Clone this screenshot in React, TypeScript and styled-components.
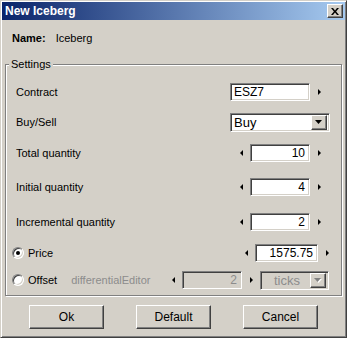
import * as React from "react";
import styled, { createGlobalStyle, css } from "styled-components";

const face = "#d4d0c8";
const shadow = "#808080";
const darkShadow = "#404040";
const font = `"Liberation Sans", Arial, sans-serif`;

const GlobalStyle = createGlobalStyle`
  html, body {
    margin: 0;
    padding: 0;
    background: ${face};
  }
  body {
    font-family: ${font};
    font-size: 11px;
    color: #000;
  }
`;

const Window = styled.div`
  box-sizing: border-box;
  width: 347px;
  height: 338px;
  display: flex;
  flex-direction: column;
  padding: 1px;
  background: ${face};
  border: 1px solid;
  border-color: ${face} ${darkShadow} ${darkShadow} ${face};
  box-shadow: inset 1px 1px #fff, inset -1px -1px ${shadow};
`;

const TitleBar = styled.div`
  height: 18px;
  display: flex;
  align-items: center;
  justify-content: space-between;
  padding: 0 2px 0 3px;
  background: linear-gradient(to right, #0a246a, #a6caf0);
`;

const Title = styled.span`
  color: #fff;
  font-weight: bold;
  font-size: 12px;
  line-height: 18px;
`;

const raised = css`
  border: 1px solid;
  border-color: #fff ${darkShadow} ${darkShadow} #fff;
  box-shadow: inset -1px -1px ${shadow}, inset 1px 1px ${face};
  background: ${face};
`;

const sunken = css`
  border: 1px solid;
  border-color: ${shadow} #fff #fff ${shadow};
  box-shadow: inset 1px 1px ${darkShadow}, inset -1px -1px ${face};
`;

const CloseButton = styled.div`
  box-sizing: border-box;
  width: 16px;
  height: 14px;
  display: flex;
  align-items: center;
  justify-content: center;
  ${raised};
`;

const Body = styled.div`
  display: flex;
  flex-direction: column;
  padding: 8px 3px 0;
`;

const NameRow = styled.div`
  height: 20px;
  display: flex;
  align-items: center;
  gap: 10px;
  padding-left: 7px;
`;

const Bold = styled.span`
  font-weight: bold;
`;

const Group = styled.fieldset`
  margin: 10px 0 0;
  padding: 6px 0 2px;
  min-width: 0;
  border: 1px solid ${shadow};
  box-shadow: inset 1px 1px #fff, 1px 1px #fff;
`;

const Legend = styled.legend`
  margin-left: 3px;
  padding: 0 2px;
  line-height: 13px;
  background: ${face};
`;

const Row = styled.div<{ $h: number; $left?: number; $right: number }>`
  height: ${(p) => p.$h}px;
  display: flex;
  align-items: center;
  padding-left: ${(p) => p.$left ?? 10}px;
  padding-right: ${(p) => p.$right}px;
`;

const Label = styled.span<{ $disabled?: boolean }>`
  color: ${(p) => (p.$disabled ? "#8c8c8c" : "#000")};
  margin-right: ${(p) => (p.$disabled ? 0 : 14)}px;
`;

const Spacer = styled.div`
  flex: 1;
`;

const Controls = styled.div`
  display: flex;
  align-items: center;
  gap: 4px;
`;

const Arrow = styled.div<{ $dir: "left" | "right" }>`
  width: 10px;
  height: 10px;
  display: flex;
  align-items: center;
  justify-content: center;
  &::before {
    content: "";
    border-top: 3px solid transparent;
    border-bottom: 3px solid transparent;
    ${(p) =>
      p.$dir === "left"
        ? "border-right: 3px solid #000;"
        : "border-left: 3px solid #000;"}
  }
`;

const Field = styled.div<{
  $w: number;
  $h?: number;
  $align?: "left" | "right";
  $disabled?: boolean;
}>`
  box-sizing: border-box;
  width: ${(p) => p.$w}px;
  height: ${(p) => p.$h ?? 18}px;
  padding: 0 4px 0 3px;
  line-height: ${(p) => (p.$h ?? 18) - 2}px;
  font-size: 12px;
  text-align: ${(p) => p.$align ?? "right"};
  color: ${(p) => (p.$disabled ? "#8c8c8c" : "#000")};
  background: ${(p) => (p.$disabled ? face : "#fff")};
  ${sunken};
`;

const Combo = styled.div<{ $w: number; $disabled?: boolean }>`
  box-sizing: border-box;
  width: ${(p) => p.$w}px;
  height: 19px;
  display: flex;
  align-items: center;
  padding: 2px;
  color: ${(p) => (p.$disabled ? "#8c8c8c" : "#000")};
  background: ${(p) => (p.$disabled ? face : "#fff")};
  ${sunken};
`;

const ComboText = styled.span<{ $center?: boolean }>`
  flex: 1;
  padding-left: 1px;
  text-align: ${(p) => (p.$center ? "center" : "left")};
  font-size: 13px;
`;

const DropButton = styled.div`
  box-sizing: border-box;
  width: 16px;
  height: 15px;
  display: flex;
  align-items: center;
  justify-content: center;
  ${raised};
`;

const Radio = styled.div<{ $checked?: boolean }>`
  box-sizing: border-box;
  width: 12px;
  height: 12px;
  margin-right: 4px;
  border-radius: 50%;
  display: flex;
  align-items: center;
  justify-content: center;
  background: #fff;
  ${sunken};
  &::before {
    content: "";
    width: 4px;
    height: 4px;
    border-radius: 50%;
    background: ${(p) => (p.$checked ? "#000" : "transparent")};
  }
`;

const ButtonBar = styled.div`
  display: flex;
  justify-content: center;
  gap: 32px;
  margin-top: 9px;
`;

const Button = styled.div`
  box-sizing: border-box;
  width: 75px;
  height: 24px;
  display: flex;
  align-items: center;
  justify-content: center;
  font-size: 12px;
  ${raised};
`;

const CloseGlyph = () => (
  <svg width="8" height="7" viewBox="0 0 8 7">
    <path d="M0 0H2L4 2.4L6 0H8L5.1 3.5L8 7H6L4 4.6L2 7H0L2.9 3.5Z" fill="#000" />
  </svg>
);

const DropGlyph: React.FC<{ disabled?: boolean }> = ({ disabled }) => (
  <svg width="8" height="5" viewBox="0 0 8 5">
    {disabled && <path d="M1 1H8L4.5 5Z" fill="#fff" />}
    <path d="M0 0H7L3.5 4Z" fill={disabled ? shadow : "#000"} />
  </svg>
);

type SpinProps = {
  value: string;
  width: number;
  disabled?: boolean;
};

const Spin: React.FC<SpinProps> = ({ value, width, disabled }) => (
  <Controls>
    <Arrow $dir="left" />
    <Field $w={width} $disabled={disabled}>
      {value}
    </Field>
    <Arrow $dir="right" />
  </Controls>
);

export default function App() {
  return (
    <>
      <GlobalStyle />
      <Window>
        <TitleBar>
          <Title>New Iceberg</Title>
          <CloseButton>
            <CloseGlyph />
          </CloseButton>
        </TitleBar>
        <Body>
          <NameRow>
            <Bold>Name:</Bold>
            <span>Iceberg</span>
          </NameRow>
          <Group>
            <Legend>Settings</Legend>
            <Row $h={30} $right={17}>
              <Label>Contract</Label>
              <Spacer />
              <Controls>
                <Field $w={80} $align="left">
                  ESZ7
                </Field>
                <Arrow $dir="right" />
              </Controls>
            </Row>
            <Row $h={30} $right={11}>
              <Label>Buy/Sell</Label>
              <Spacer />
              <Combo $w={100}>
                <ComboText>Buy</ComboText>
                <DropButton>
                  <DropGlyph />
                </DropButton>
              </Combo>
            </Row>
            <Row $h={32} $right={17}>
              <Label>Total quantity</Label>
              <Spacer />
              <Spin value="10" width={60} />
            </Row>
            <Row $h={36} $right={17}>
              <Label>Initial quantity</Label>
              <Spacer />
              <Spin value="4" width={60} />
            </Row>
            <Row $h={34} $right={17}>
              <Label>Incremental quantity</Label>
              <Spacer />
              <Spin value="2" width={60} />
            </Row>
            <Row $h={28} $left={6} $right={9}>
              <Radio $checked />
              <Label>Price</Label>
              <Spacer />
              <Spin value="1575.75" width={63} />
            </Row>
            <Row $h={26} $left={6} $right={12}>
              <Radio />
              <Label>Offset</Label>
              <Label $disabled>differentialEditor</Label>
              <Spacer />
              <Controls>
                <Spin value="2" width={60} disabled />
                <Combo $w={69} $disabled>
                  <ComboText $center>ticks</ComboText>
                  <DropButton>
                    <DropGlyph disabled />
                  </DropButton>
                </Combo>
              </Controls>
            </Row>
          </Group>
          <ButtonBar>
            <Button>Ok</Button>
            <Button>Default</Button>
            <Button>Cancel</Button>
          </ButtonBar>
        </Body>
      </Window>
    </>
  );
}
